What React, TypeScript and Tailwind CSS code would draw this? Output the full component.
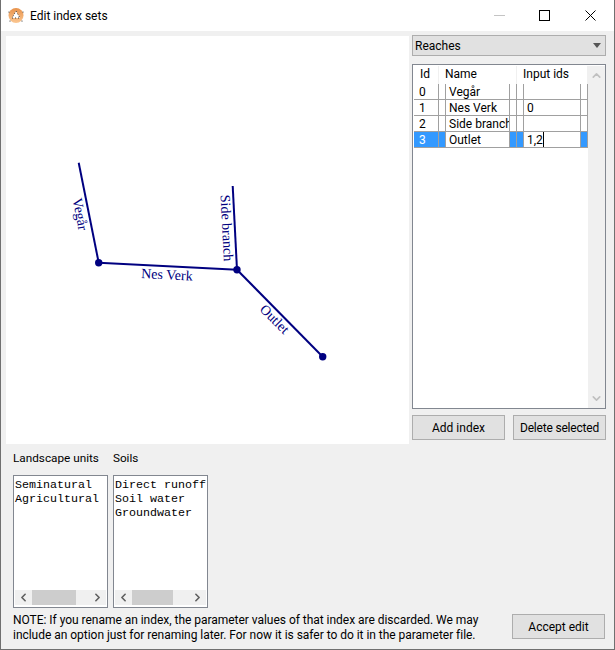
import { ChevronLeft, ChevronRight, ChevronUp, ChevronDown } from 'lucide-react'

const rows = [
  { id: '0', name: 'Vegår', inputs: '' },
  { id: '1', name: 'Nes Verk', inputs: '0' },
  { id: '2', name: 'Side branch', inputs: '' },
  { id: '3', name: 'Outlet', inputs: '1,2', selected: true },
]

function AppIcon() {
  return (
    <svg width="16" height="17" viewBox="0 0 16 17" className="shrink-0">
      <defs>
        <linearGradient id="ic" x1="0" y1="0" x2="0" y2="1">
          <stop offset="0" stopColor="#e8924a" />
          <stop offset="1" stopColor="#fbc792" />
        </linearGradient>
      </defs>
      <circle cx="8" cy="8.5" r="7.5" fill="url(#ic)" />
      <path d="M8 4 L12 11 H4 Z" fill="#fff" stroke="#333" strokeWidth="1" strokeDasharray="1 2" />
      <circle cx="1" cy="5" r="0.6" fill="#222" />
      <circle cx="15" cy="5" r="0.6" fill="#222" />
      <circle cx="2" cy="14" r="0.6" fill="#222" />
      <circle cx="14" cy="14" r="0.6" fill="#222" />
    </svg>
  )
}

function WindowControls() {
  return (
    <div className="ml-auto flex items-center">
      <svg width="11" height="11" viewBox="0 0 11 11" className="mr-[34px]">
        <path d="M0 5.5 H11" stroke="#c4c4c4" strokeWidth="1" />
      </svg>
      <svg width="11" height="11" viewBox="0 0 11 11" className="mr-[35px]">
        <rect x="0.5" y="0.5" width="10" height="10" fill="none" stroke="#000" strokeWidth="1" />
      </svg>
      <svg width="11" height="11" viewBox="0 0 11 11" className="mr-[18px]">
        <path d="M0.5 0.5 L10.5 10.5 M10.5 0.5 L0.5 10.5" stroke="#000" strokeWidth="1" />
      </svg>
    </div>
  )
}

function Button({ label, className }: { label: string; className: string }) {
  return (
    <button className={`h-[25px] w-[93px] bg-[#e1e1e1] border border-[#adadad] text-[12px] text-black ${className}`}>
      {label}
    </button>
  )
}

function ListBox({ items, thumb }: { items: string[]; thumb: string }) {
  return (
    <div className="w-[95px] h-[133px] bg-white border border-[#828790] flex flex-col">
      <div className="flex-1 px-[1px] pt-[2px] font-['Liberation_Mono',monospace] text-[11.67px] leading-[14px] text-black overflow-hidden whitespace-nowrap">
        {items.map((item) => (
          <div key={item}>{item}</div>
        ))}
      </div>
      <div className="h-[15px] mx-[1px] mb-[2px] bg-[#f0f0f0] flex items-center">
        <div className="w-[17px] flex justify-center">
          <ChevronLeft size={13} strokeWidth={3} className="text-[#606060]" />
        </div>
        <div className={`h-[15px] bg-[#cdcdcd] ${thumb}`} />
        <div className="ml-auto w-[17px] flex justify-center">
          <ChevronRight size={13} strokeWidth={3} className="text-[#606060]" />
        </div>
      </div>
    </div>
  )
}

function IndexTable() {
  return (
    <div className="h-[345px] bg-white border border-[#828790] mt-[8px] flex pl-[1px] pt-[1px]">
      <div className="w-[174px]">
        <div className="flex h-[18px] text-[12px] leading-[16px] text-black">
          <div className="w-[25px] pl-[6px] border-r border-[#f0f0f0]">Id</div>
          <div className="w-[78px] pl-[6px] border-r border-[#f0f0f0]">Name</div>
          <div className="w-[71px] pl-[6px] border-r border-[#f0f0f0]">Input ids</div>
        </div>
        {rows.map((row) => (
          <div
            key={row.id}
            className={`flex h-[16px] text-[12px] leading-[16px] border-b border-[#a0a0a0] ${row.selected ? 'bg-[#3399ff]' : ''}`}
          >
            <div className={`w-[25px] pl-[5px] border-r border-[#a0a0a0] ${row.selected ? 'text-white' : 'text-black'}`}>
              {row.id}
            </div>
            <div className="w-[6px]" />
            <div className="w-[65px] pl-[3px] bg-white border-x border-[#a0a0a0] overflow-hidden whitespace-nowrap">
              {row.name}
            </div>
            <div className="w-[7px] border-r border-[#a0a0a0]" />
            <div className="w-[6px]" />
            <div className="w-[58px] pl-[3px] bg-white border-x border-[#a0a0a0] flex">
              {row.inputs}
              {row.selected && <span className="w-[1px] h-[15px] bg-black" />}
            </div>
            <div className="w-[7px] border-r border-[#a0a0a0]" />
          </div>
        ))}
      </div>
      <div className="w-[17px] ml-auto bg-[#f0f0f0] flex flex-col justify-between items-center py-[3px]">
        <ChevronUp size={13} strokeWidth={3} className="text-[#c0c0c0]" />
        <ChevronDown size={13} strokeWidth={3} className="text-[#c0c0c0]" />
      </div>
    </div>
  )
}

export default function App() {
  return (
    <div className="w-[615px] h-[650px] bg-[#f0f0f0] border-x border-b border-[#707070] font-['Roboto',sans-serif] text-black overflow-hidden">
      <div className="h-[31px] bg-white flex items-center pl-[7px]">
        <AppIcon />
        <span className="ml-[6px] text-[12px]">Edit index sets</span>
        <WindowControls />
      </div>

      <div className="flex pt-[5px] pl-[5px]">
        <div className="w-[403px] h-[408px] bg-white">
          <svg width="403" height="408" viewBox="6 36 403 408" fontFamily="'Liberation Serif', serif" fontSize="14" fill="#000080">
            <g stroke="#000080" strokeWidth="2" fill="none">
              <path d="M78.7 162.7 L98.7 262.7" />
              <path d="M232.7 186 L237 269.7" />
              <path d="M98.7 262.7 L237 269.7" />
              <path d="M237 269.7 L322.7 356.7" />
            </g>
            <circle cx="98.7" cy="262.7" r="3.7" />
            <circle cx="237" cy="269.7" r="3.7" />
            <circle cx="322.7" cy="356.7" r="3.7" />
            <text transform="translate(72.5 199) rotate(79)">Vegår</text>
            <text transform="translate(220.5 195) rotate(87)">Side branch</text>
            <text transform="translate(141 278) rotate(3)">Nes Verk</text>
            <text transform="translate(259 310) rotate(45)">Outlet</text>
          </svg>
        </div>
        <div className="w-[194px] ml-[3px] -mt-[1px]">
          <div className="h-[21px] bg-[#e1e1e1] border border-[#adadad] flex items-center justify-between pl-[2px] pr-[3px] text-[12px]">
            <span>Reaches</span>
            <svg width="10" height="6" viewBox="0 0 10 6">
              <path d="M1 0 H9 L5 5 Z" fill="#555" />
            </svg>
          </div>
          <IndexTable />
          <div className="flex justify-between mt-[6px]">
            <Button label="Add index" className="" />
            <Button label="Delete selected" className="tracking-[-0.2px]" />
          </div>
        </div>
      </div>

      <div className="flex gap-[14px] pl-[12px] mt-[5px] text-[11.75px] leading-[18px]">
        <span>Landscape units</span>
        <span>Soils</span>
      </div>
      <div className="flex gap-[5px] pl-[12px] mt-[8px]">
        <ListBox thumb="w-[44px]" items={['Seminatural', 'Agricultural']} />
        <ListBox thumb="w-[41px]" items={['Direct runoff', 'Soil water', 'Groundwater']} />
      </div>
      <div className="flex justify-between pl-[12px] pr-[9px] mt-[5px]">
        <p className="text-[12px] leading-[15px] tracking-[-0.03px]">
          NOTE: If you rename an index, the parameter values of that index are discarded. We may
          <br />
          include an option just for renaming later. For now it is safer to do it in the parameter file.
        </p>
        <Button label="Accept edit" className="mt-[1px]" />
      </div>
    </div>
  )
}
